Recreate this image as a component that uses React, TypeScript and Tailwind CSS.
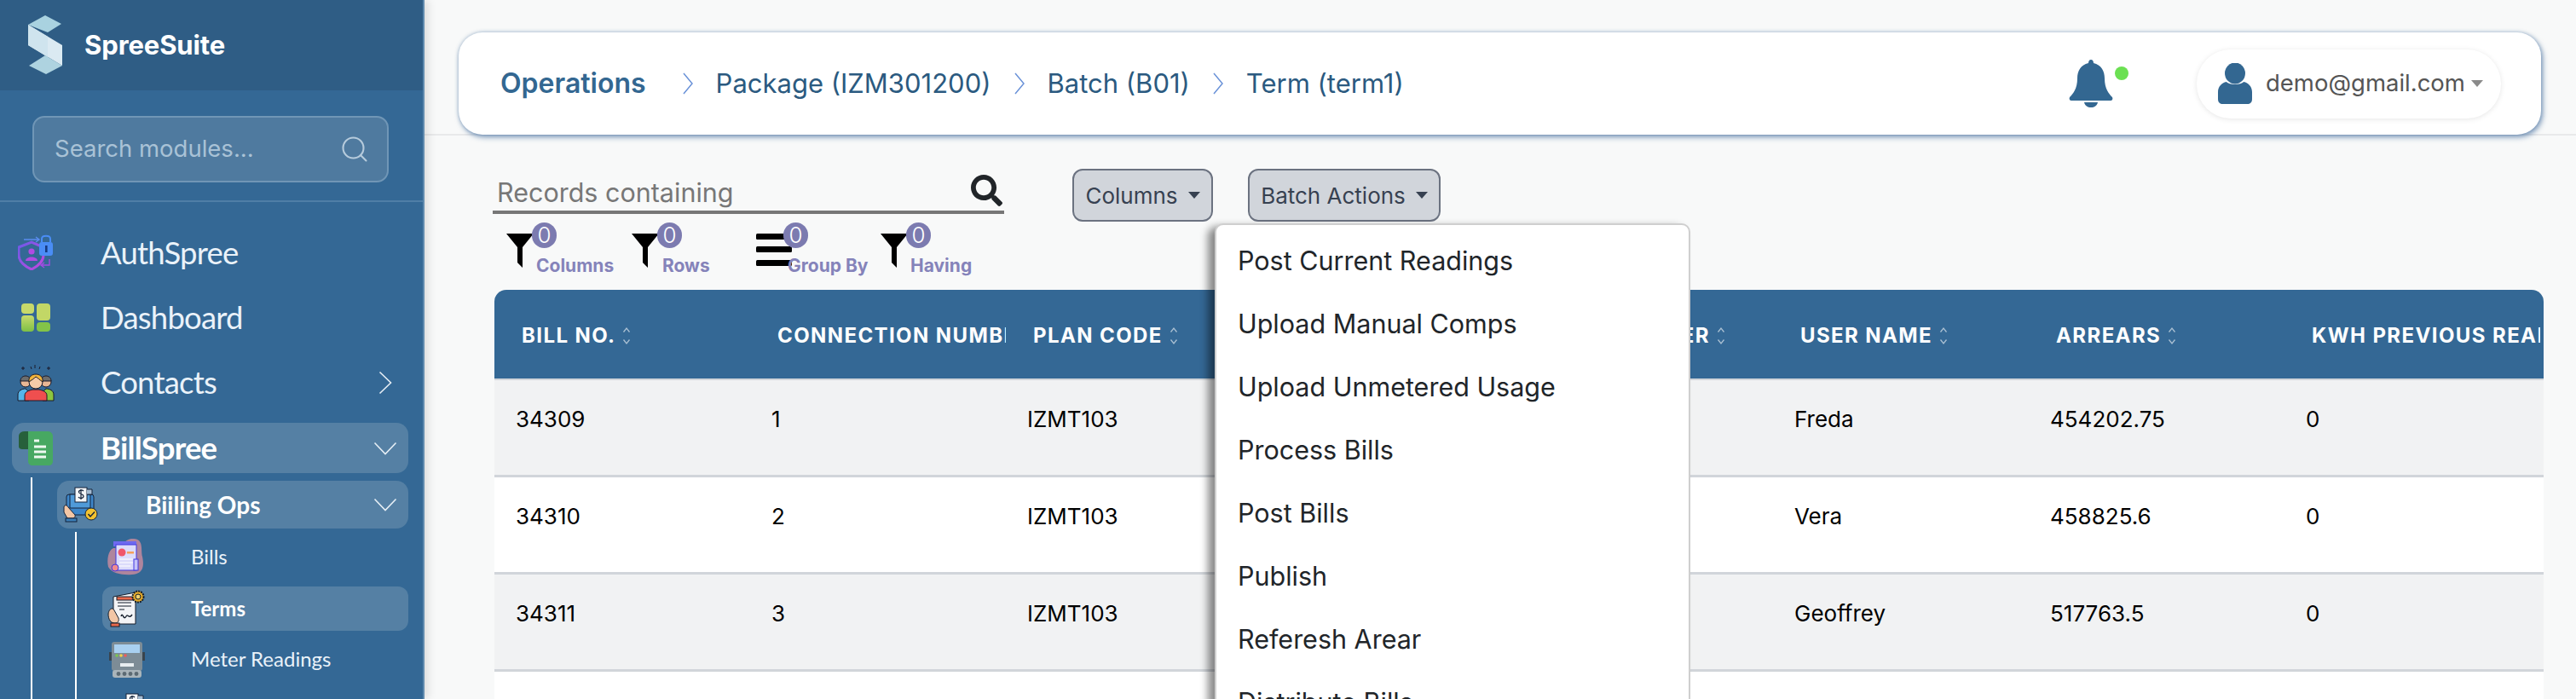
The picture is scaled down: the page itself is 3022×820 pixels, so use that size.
import React from "react";
import { Search } from "lucide-react";
import { FaSearch } from "react-icons/fa";

const Chevron = ({ dir }: { dir: "right" | "down" }) =>
  dir === "right" ? (
    <svg viewBox="0 0 16 28" className="h-[28px] w-[16px]" fill="none" stroke="#e6eef5" strokeWidth="1.6">
      <path d="M1.5 1.5 L14.5 14 L1.5 26.5" />
    </svg>
  ) : (
    <svg viewBox="0 0 28 16" className="h-[16px] w-[28px]" fill="none" stroke="#e6eef5" strokeWidth="1.6">
      <path d="M1.5 1.5 L14 14.5 L26.5 1.5" />
    </svg>
  );

const Logo = () => (
  <svg viewBox="0 0 42 70" className="h-[70px] w-[42px]">
    <polygon points="1,11 21,0 40,10 24,20" fill="#a9d2e0" />
    <polygon points="1,11 41,35 41,59 1,35" fill="#dbeaf2" />
    <polygon points="1,11 1,35 24,49 24,25" fill="#cfe4ee" />
    <polygon points="2,59 21,47 41,59 22,69" fill="#aed3e0" />
  </svg>
);

const AuthIcon = () => (
  <svg viewBox="0 0 44 42" className="h-[42px] w-[44px]" fill="none">
    <defs>
      <linearGradient id="sh" x1="0" y1="0" x2="1" y2="1">
        <stop offset="0" stopColor="#6d5be8" />
        <stop offset="1" stopColor="#c248e0" />
      </linearGradient>
    </defs>
    <path d="M7 6 H24 M21 3 L25 6 L21 9" stroke="#5a8cf0" strokeWidth="1.4" />
    <path d="M1 15 L16 9 L30 15 V24 C30 32 22 38 16 41 C9 38 1 32 1 24 Z" stroke="url(#sh)" strokeWidth="3" />
    <circle cx="16" cy="20" r="3.6" fill="#b14be3" />
    <path d="M9 31 C9 25 23 25 23 31 Z" fill="#b14be3" />
    <path d="M28 9 V5 C28 0.5 38 0.5 38 5 V9" stroke="#4a8df5" strokeWidth="2" />
    <rect x="25" y="9" width="16" height="16" rx="3" fill="#4a8df5" />
    <rect x="32" y="13" width="2.6" height="8" fill="#173a80" />
    <path d="M37 29 V36 H28 M31 33 L27 36 L31 39" stroke="#a14be3" strokeWidth="1.4" />
  </svg>
);

const DashIcon = () => (
  <svg viewBox="0 0 34 33" className="h-[33px] w-[34px]">
    <defs>
      <linearGradient id="dg" x1="0" y1="0" x2="0" y2="1">
        <stop offset="0" stopColor="#c9da6c" />
        <stop offset="1" stopColor="#7dc045" />
      </linearGradient>
    </defs>
    <rect x="0" y="0" width="15" height="12" rx="4" fill="#c7d96a" />
    <rect x="0" y="14" width="15" height="19" rx="4" fill="url(#dg)" />
    <rect x="18" y="0" width="16" height="20" rx="4" fill="#c2d766" />
    <rect x="18" y="22" width="16" height="11" rx="4" fill="#83c348" />
  </svg>
);

const ContactsIcon = () => (
  <svg viewBox="0 0 44 44" className="h-[44px] w-[44px]" stroke="#1b1b2a" strokeWidth="1">
    <path d="M21 1 V5 M16 3 L17 6 M27 3 L26 6 M5 5 H9 M7 3 V7 M35 5 H39 M37 3 V7" />
    <path d="M1 43 V36 C1 31 6 29 10 29 L14 33 V43 Z" fill="#56b4e9" />
    <path d="M43 43 V36 C43 31 38 29 34 29 L30 33 V43 Z" fill="#8cc63f" />
    <circle cx="10" cy="21" r="6" fill="#e9b795" />
    <path d="M4 20 C4 12 16 12 16 20 Z" fill="#6d6d6d" />
    <circle cx="34" cy="21" r="6" fill="#e9b795" />
    <path d="M28 20 C28 12 40 12 40 20 Z" fill="#6d6d6d" />
    <path d="M9 43 V37 C9 32 15 31 18 30 H26 C29 31 35 32 35 37 V43 Z" fill="#ef4f4f" />
    <circle cx="22" cy="21" r="8" fill="#f6cba8" />
    <path d="M14 21 C12 9 32 9 30 21 C27 19 24 16 22 15 C20 17 17 19 14 21 Z" fill="#f0b33c" />
  </svg>
);

const BillSpreeIcon = () => (
  <svg viewBox="0 0 40 40" className="h-[40px] w-[40px]">
    <path d="M0 6 C0 2 3 0 7 0 H14 V21 H4 C2 21 0 20 0 18 Z" fill="#27603b" />
    <path d="M11 0 H34 C38 0 40 3 40 6 V35 C40 38 38 40 35 40 H16 C13 40 11 38 11 35 Z" fill="#47a862" />
    <path d="M18 11 H24 M18 18 H32 M18 24 H32 M18 30 H32" stroke="#eef8f0" strokeWidth="3" />
  </svg>
);

const BillingOpsIcon = ({ cls = "h-[42px] w-[42px]" }: { cls?: string }) => (
  <svg viewBox="0 0 42 42" className={cls} stroke="#14233a" strokeWidth="1">
    <rect x="4" y="9" width="32" height="24" rx="3" fill="#3d86c9" />
    <rect x="8" y="9" width="24" height="16" fill="#4f9ad8" />
    <rect x="14" y="1" width="14" height="17" fill="#f4f6f8" />
    <path d="M24 5 C22 3 18 4 18.5 6.5 C19 9 24 8 24 11 C24 14 19 14 18 12 M21 3 V15" fill="none" strokeWidth="1.2" />
    <path d="M28 3 H34 V9 H28" fill="#a5bcd2" />
    <path d="M1 24 C1 21 5 21 6 24 L14 33 C15 36 12 37 11 37 H5 L1 30 Z" fill="#f3c6a5" />
    <rect x="3" y="37" width="13" height="4" fill="#3b7fb8" />
    <circle cx="33" cy="32" r="7" fill="#f3c230" />
    <path d="M29.5 32 L32 35 L37 29.5" fill="none" strokeWidth="1.4" />
  </svg>
);

const BillsIcon = () => (
  <svg viewBox="0 0 45 44" className="h-[44px] w-[45px]">
    <path d="M8 12 C20 12 20 0 32 1 C44 2 40 14 42 22 C44 32 44 42 30 43 C20 44 6 42 2 34 C0 26 2 14 8 12 Z" fill="#d88fa0" opacity="0.75" />
    <rect x="8" y="4" width="27" height="6" fill="#6e6af0" />
    <rect x="11" y="8" width="24" height="30" fill="#dcdcfb" stroke="#4338e0" strokeWidth="1" />
    <rect x="32" y="25" width="5" height="13" fill="#c4c3f8" stroke="#4338e0" strokeWidth="1" />
    <circle cx="18" cy="17" r="4.5" fill="#f0566a" />
    <rect x="24" y="16" width="8" height="2.5" fill="#f5a05a" />
    <path d="M15 25 H31 M15 29 H31 M15 33 H28" stroke="#fff" strokeWidth="1.2" />
    <circle cx="10" cy="35" r="4" fill="#f08a8f" stroke="#4338e0" strokeWidth="1" />
  </svg>
);

const TermsIcon = () => (
  <svg viewBox="0 0 44 44" className="h-[44px] w-[44px]" stroke="#141d2a" strokeWidth="1">
    <path d="M7 8 L33 3 V40 H7 Z" fill="#f3f4f6" />
    <rect x="11" y="8" width="19" height="4" fill="#e96a4c" />
    <path d="M12 15 H28 M12 19 H28 M14 23 H20" strokeWidth="1.2" />
    <path d="M16 31 C18 25 19 37 22 31 C24 27 25 35 29 29" fill="none" strokeWidth="1.4" />
    <path d="M1 28 C2 22 6 20 8 24 L13 33 C14 37 12 39 9 39 C4 39 1 35 1 28 Z" fill="#f3c6a5" />
    <rect x="4" y="39" width="10" height="4" fill="#e96a4c" />
    <circle cx="36" cy="8" r="6.5" fill="#e2a92a" stroke="#141d2a" strokeWidth="2" strokeDasharray="2 1" />
    <circle cx="36" cy="8" r="3" fill="#f3d36b" />
  </svg>
);

const MeterIcon = () => (
  <svg viewBox="0 0 42 42" className="h-[42px] w-[42px]">
    <rect x="0" y="12" width="3" height="10" fill="#39444d" />
    <rect x="39" y="12" width="3" height="10" fill="#39444d" />
    <rect x="3" y="0" width="36" height="34" rx="3" fill="#7d8c96" />
    <rect x="6" y="3" width="30" height="10" fill="#a9d0f0" />
    <circle cx="9" cy="16" r="1.8" fill="#7bc74d" />
    <circle cx="14" cy="16" r="1.8" fill="#f2d04a" />
    <circle cx="19" cy="16" r="1.8" fill="#ef5b5b" />
    <rect x="13" y="25" width="16" height="4" fill="#e8edf0" />
    <rect x="4" y="33" width="34" height="9" rx="3" fill="#a9b4ba" />
    <circle cx="11" cy="37.5" r="2.4" fill="#5c6a73" />
    <circle cx="18" cy="37.5" r="2.4" fill="#5c6a73" />
    <circle cx="25" cy="37.5" r="2.4" fill="#5c6a73" />
    <circle cx="32" cy="37.5" r="2.4" fill="#5c6a73" />
  </svg>
);

const Funnel = () => (
  <svg viewBox="0 0 32 40" className="h-[40px] w-[34px] shrink-0">
    <polygon points="0,0 32,0 19,16 19,40 13,34 13,16" fill="#000" />
  </svg>
);

const Lines = () => (
  <svg viewBox="0 0 42 40" className="h-[40px] w-[42px] shrink-0">
    <rect x="0" y="0" width="42" height="7" rx="1.5" fill="#000" />
    <rect x="0" y="15" width="42" height="7" rx="1.5" fill="#000" />
    <rect x="0" y="31" width="42" height="7" rx="1.5" fill="#000" />
  </svg>
);

const Sort = () => (
  <svg viewBox="0 0 10 24" className="ml-[8px] h-[24px] w-[10px] shrink-0" fill="none" stroke="#a9bfd2" strokeWidth="1.3">
    <path d="M1.5 7.5 L5 3 L8.5 7.5 M1.5 16.5 L5 21 L8.5 16.5" />
  </svg>
);

const Caret = ({ color = "#374151" }: { color?: string }) => (
  <svg viewBox="0 0 14 8" className="ml-[12px] h-[8px] w-[14px]">
    <polygon points="0,0 14,0 7,8" fill={color} />
  </svg>
);

const Crumb = () => (
  <svg viewBox="0 0 12 28" className="mx-[27px] h-[28px] w-[12px] shrink-0" fill="none" stroke="#6a92d8" strokeWidth="1.5">
    <path d="M1 2 L11 14 L1 26" />
  </svg>
);

const filters = [
  { label: "Columns", kind: "f", w: "w-[151px]", ml: "ml-[2px]" },
  { label: "Rows", kind: "f", w: "w-[151px]", ml: "ml-[3px]" },
  { label: "Group By", kind: "l", w: "w-[149px]", ml: "-ml-[5px]" },
  { label: "Having", kind: "f", w: "w-[150px]", ml: "ml-[2px]" },
];

const headers = ["BILL NO.", "CONNECTION NUMBER", "PLAN CODE", "PLAN NAME", "ACCT NUMBER", "USER NAME", "ARREARS", "KWH PREVIOUS READING"];
const noSort = [1, 7];

const rows = [
  ["34309", "1", "IZMT103", "Standard", "1001", "Freda", "454202.75", "0"],
  ["34310", "2", "IZMT103", "Standard", "1002", "Vera", "458825.6", "0"],
  ["34311", "3", "IZMT103", "Standard", "1003", "Geoffrey", "517763.5", "0"],
];

const menu = [
  "Post Current Readings",
  "Upload Manual Comps",
  "Upload Unmetered Usage",
  "Process Bills",
  "Post Bills",
  "Publish",
  "Referesh Arear",
  "Distribute Bills",
];

export default function App() {
  return (
    <div className="flex h-[820px] w-[3022px] overflow-hidden bg-[#f8f9f9] font-['Inter',sans-serif]">
      <aside className="z-10 h-[820px] w-[498px] shrink-0 overflow-hidden border-r-2 border-[#5f8aae] bg-[#346895] font-['Lato',sans-serif] shadow-[4px_0_10px_rgba(0,0,0,0.12)]">
        <div className="flex h-[106px] items-center bg-[#2f5d85] pl-[32px]">
          <Logo />
          <span className="ml-[25px] font-['Inter',sans-serif] text-[31px] font-bold tracking-[-0.1px] text-white">SpreeSuite</span>
        </div>
        <div className="border-b-2 border-[#4f7ea6] px-[38px] pt-[30px] pb-[21px]">
          <div className="flex h-[78px] w-[418px] items-center justify-between rounded-[14px] border-2 border-[#7096b6] bg-[#4f7a9f] pr-[20px] pl-[24px] font-['Inter',sans-serif] text-[27.5px] text-[#a9c2d6]">
            <span>Search modules...</span>
            <Search size={36} strokeWidth={1.4} color="#b6cbdc" />
          </div>
        </div>

        <nav className="pt-[21px] text-[36.5px] tracking-[-0.8px] text-[#eaf2f9]">
          <div className="flex h-[76.5px] items-center pl-[21px]">
            <div className="w-[97px] shrink-0"><AuthIcon /></div>
            <span>AuthSpree</span>
          </div>
          <div className="flex h-[76.5px] items-center pl-[25px]">
            <div className="w-[93px] shrink-0"><DashIcon /></div>
            <span>Dashboard</span>
          </div>
          <div className="flex h-[76.5px] items-center justify-between pr-[36px] pl-[20px]">
            <div className="flex items-center">
              <div className="w-[98px] shrink-0"><ContactsIcon /></div>
              <span className="-mt-[2px]">Contacts</span>
            </div>
            <Chevron dir="right" />
          </div>

          <div className="mt-[8.5px] mr-[17px] ml-[14px] flex h-[59px] items-center justify-between rounded-[14px] bg-[#5580a4] pr-[13px] pl-[8px]">
            <div className="flex items-center">
              <div className="w-[96px] shrink-0"><BillSpreeIcon /></div>
              <span className="-mt-[1px] font-bold text-white">BillSpree</span>
            </div>
            <Chevron dir="down" />
          </div>

          <div className="mt-[5px] mr-[17px] ml-[36px] border-l-2 border-white pt-[4px] pl-[29px] tracking-normal">
            <div className="flex h-[56px] items-center justify-between rounded-[14px] bg-[#5580a4] pr-[13px] pl-[7px] text-[28px]">
              <div className="flex items-center">
                <div className="w-[97px] shrink-0"><BillingOpsIcon /></div>
                <span className="-mt-[1px] font-bold text-white">Biiling Ops</span>
              </div>
              <Chevron dir="down" />
            </div>

            <div className="mt-[4px] ml-[21px] border-l-2 border-white pl-[30px] text-[24px]">
              <div className="flex h-[64px] items-center pb-[6px] pl-[5px]">
                <div className="w-[99px] shrink-0"><BillsIcon /></div>
                <span>Bills</span>
              </div>
              <div className="flex h-[52px] items-center rounded-[12px] bg-[#5580a4] pl-[6px]">
                <div className="w-[98px] shrink-0"><TermsIcon /></div>
                <span className="font-bold text-white">Terms</span>
              </div>
              <div className="flex h-[68px] items-center pl-[8px]">
                <div className="w-[96px] shrink-0"><MeterIcon /></div>
                <span className="-mt-[2px]">Meter Readings</span>
              </div>
              <div className="flex h-[60px] items-start pt-[5px] pl-[14px]">
                <BillingOpsIcon />
              </div>
            </div>
          </div>
        </nav>
      </aside>

      <main className="flex-1">
        <div className="h-[159px] border-b-2 border-[#e8e9ea] pt-[38px] pl-[40px]">
          <div className="flex h-[120px] w-[2443px] items-center justify-between rounded-[28px] bg-white pr-[47px] pl-[49px] shadow-[0_0_4px_rgba(90,130,170,0.5),2px_3px_6px_rgba(70,110,160,0.65)]">
            <div className="flex items-center text-[31px] text-[#2b5a80]">
              <span className="text-[32px] font-semibold text-[#336791]">Operations</span>
              <span className="ml-[16px] flex items-center">
                <Crumb />
              </span>
              <span>Package (IZM301200)</span>
              <Crumb />
              <span>Batch (B01)</span>
              <Crumb />
              <span>Term (term1)</span>
            </div>
            <div className="flex items-center">
              <div className="relative mr-[97px] h-[56px] w-[53px]">
                <svg viewBox="0 0 52 56" className="h-[56px] w-[52px]" fill="#336791">
                  <path d="M26 0 C28 0 29 2 29 4 C38 6 42 13 42 22 C42 34 47 40 51 44 C52 46 51 48 49 48 H3 C1 48 0 46 1 44 C5 40 10 34 10 22 C10 13 14 6 23 4 C23 2 24 0 26 0 Z" />
                  <path d="M18 50 H34 C33 54 30 56 26 56 C22 56 19 54 18 50 Z" />
                </svg>
                <span className="absolute top-[8px] left-[54px] h-[16px] w-[16px] rounded-full bg-[#6be052]" />
              </div>
              <div className="flex h-[81px] w-[357px] items-center rounded-[40px] bg-white pl-[25px] shadow-[0_1px_6px_rgba(0,0,0,0.1)]">
                <svg viewBox="0 0 40 48" className="h-[48px] w-[40px] shrink-0" fill="#336791">
                  <ellipse cx="20" cy="12" rx="12" ry="12.5" />
                  <path d="M10 22 C13 26 27 26 30 22 C36 23 40 28 40 34 V42 C40 46 38 48 34 48 H6 C2 48 0 46 0 42 V34 C0 28 4 23 10 22 Z" />
                </svg>
                <span className="ml-[16px] text-[27.5px] text-[#555]">demo@gmail.com</span>
                <svg viewBox="0 0 14 8" className="ml-[7px] h-[8px] w-[14px]"><polygon points="0,0 14,0 7,8" fill="#8a8a8a" /></svg>
              </div>
            </div>
          </div>
        </div>

        <div className="flex h-[158px] items-start pl-[80px]">
          <div className="mt-[46px] w-[600px]">
            <div className="flex h-[46px] items-center justify-between border-b-4 border-[#777] pr-[2px] pl-[5px] text-[30.5px] text-[#777]">
              <span>Records containing</span>
              <FaSearch size={37} color="#212529" className="mb-[6px]" />
            </div>
            <div className="mt-[6px] flex pl-[15px]">
              {filters.map((f) => (
                <div key={f.label} className={`relative flex h-[60px] items-start pt-[17px] ${f.w}`}>
                  {f.kind === "f" ? <Funnel /> : <Lines />}
                  <span className={`mt-[22px] text-[21px] font-bold whitespace-nowrap text-[#8583ba] ${f.ml}`}>{f.label}</span>
                  <span className={`absolute top-[4px] ${f.kind === "f" ? "left-[31px]" : "left-[32px]"} flex h-[30px] w-[29px] items-center justify-center rounded-full bg-[#7c7bb0] text-[26px] leading-none font-light text-white`}>0</span>
                </div>
              ))}
            </div>
          </div>
          <div className="mt-[39px] ml-[80px] flex h-[62px] w-[165px] items-center justify-center rounded-[12px] border-2 border-[#6b7280] bg-[#d1d5db] text-[26px] text-[#374151]">
            Columns<Caret />
          </div>
          <div className="relative mt-[39px] ml-[41px]">
            <div className="flex h-[62px] w-[226px] items-center justify-center rounded-[12px] border-2 border-[#6b7280] bg-[#d1d5db] text-[26px] text-[#374151]">
              Batch Actions<Caret />
            </div>
            <div className="absolute top-[64px] -left-[39px] z-20 h-[620px] w-[558px] rounded-[10px] border-2 border-[#cfcfcf] bg-white pt-[5px] pl-[25px] text-[30.5px] text-[#212529] shadow-[-8px_4px_10px_rgba(0,0,0,0.45)]">
              {menu.map((m) => (
                <div key={m} className="flex h-[74px] items-center">{m}</div>
              ))}
            </div>
          </div>
        </div>

        <div className="mt-[23px] ml-[82px] w-[2404px] overflow-hidden rounded-t-[14px]">
          <div className="flex h-[104px] bg-[#346895]">
            {headers.map((h, i) => (
              <div key={h} className="flex w-[300px] shrink-0 items-center overflow-hidden pt-[4px] pl-[32px] text-[24px] font-bold tracking-[1.4px] whitespace-nowrap text-white">
                {h}
                {!noSort.includes(i) && <Sort />}
              </div>
            ))}
          </div>
          <div className="h-[2px] bg-[#d1d5da]" />
          {rows.map((r, ri) => (
            <div key={ri} className={`flex h-[114px] border-b-[3px] border-[#d1d5da] ${ri % 2 === 0 ? "bg-[#f1f2f3]" : "bg-white"}`}>
              {r.map((c, ci) => (
                <div key={ci} className="w-[300px] shrink-0 pt-[30px] pl-[25px] text-[26px] leading-[32px] text-black">{c}</div>
              ))}
            </div>
          ))}
          <div className="h-[60px] bg-white" />
        </div>
      </main>
    </div>
  );
}
